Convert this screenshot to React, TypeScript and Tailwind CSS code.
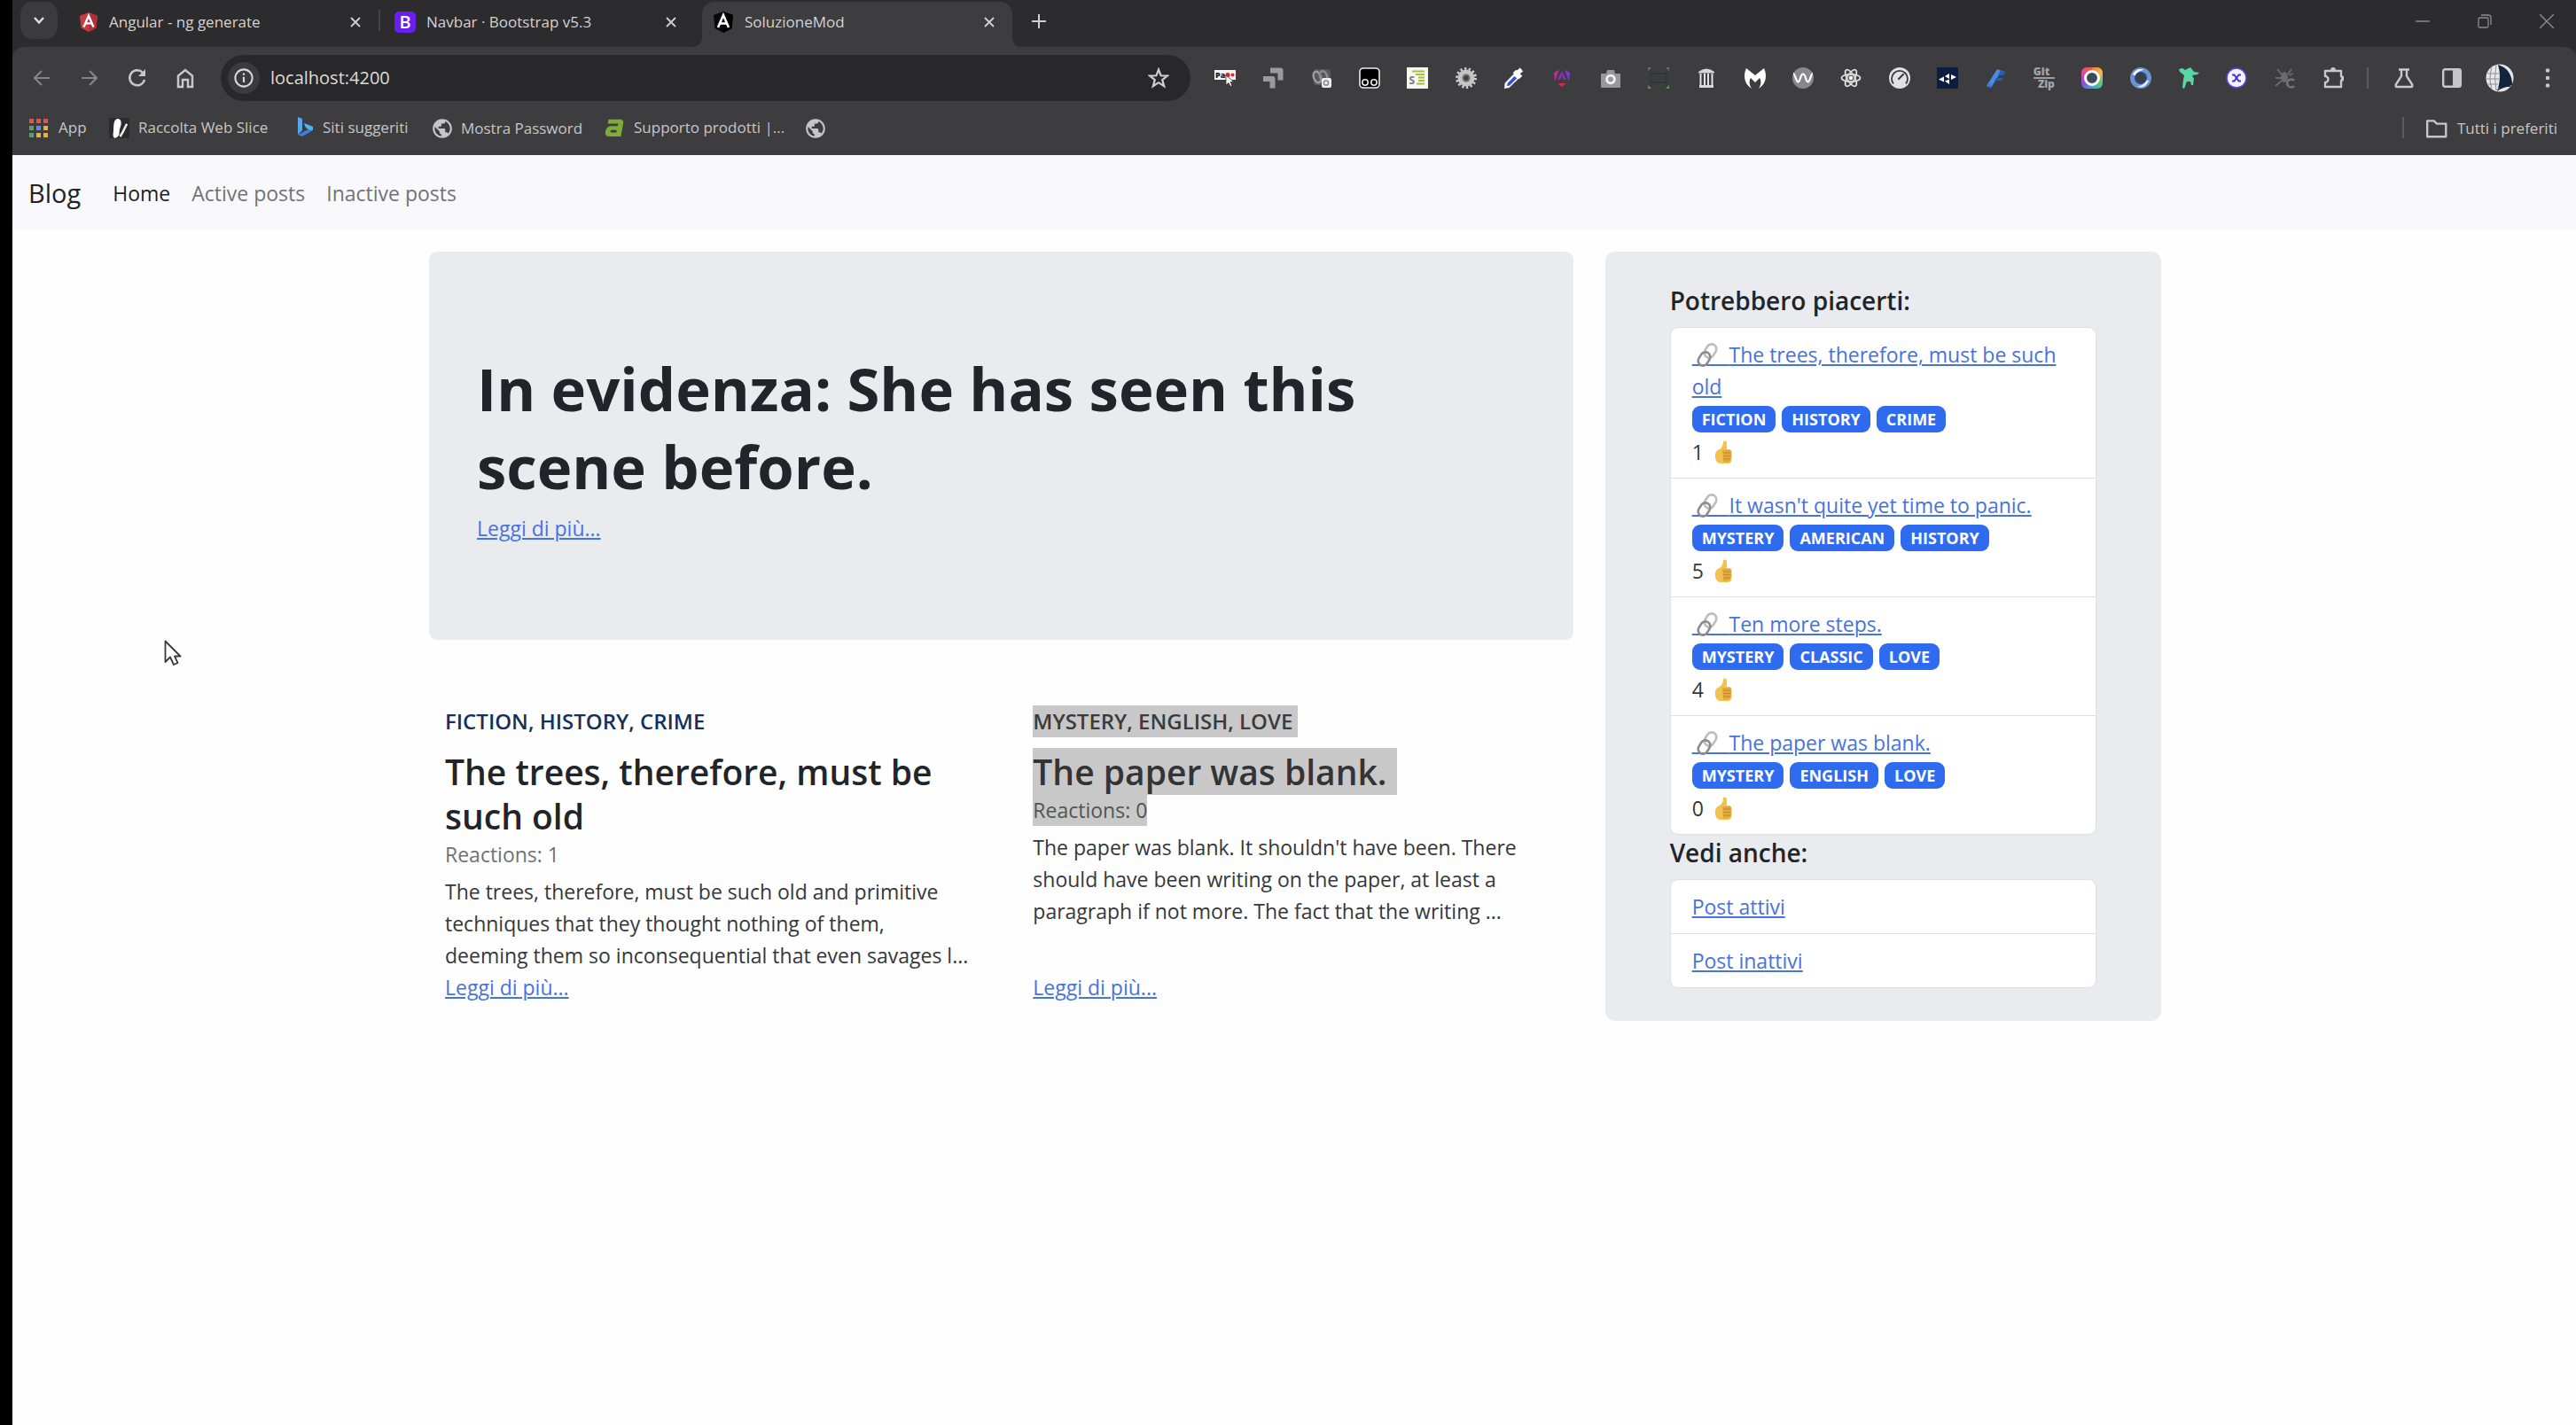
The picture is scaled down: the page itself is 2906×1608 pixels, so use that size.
import React from "react";
import { MdPublic } from "react-icons/md";

type P = { className?: string };

/* ---------- browser chrome icons ---------- */

const Svg = ({ className = "size-6", children, box = "0 0 24 24" }: { className?: string; children: React.ReactNode; box?: string }) => (
  <svg viewBox={box} className={`${className} block shrink-0`} fill="none" aria-hidden="true">
    {children}
  </svg>
);

const AngularIcon = ({ className, dark }: P & { dark?: boolean }) => (
  <Svg className={className}>
    {dark ? (
      <>
        <path d="M12 0 23 4 21.500 19 12 24 2.500 19 1 4Z" fill="#08080a" />
        <path d="M12 0 23 4 21.500 19 12 24Z" fill="#000" />
      </>
    ) : (
      <>
        <path d="M12 0 23 4 21.300 19 12 24 2.700 19 1 4Z" fill="#c73a42" />
        <path d="M12 0 23 4 21.300 19 12 24Z" fill="#b0303a" />
      </>
    )}
    <path d="M6 18 12 4 18 18M8.500 13.500H15.500" stroke="#fff" strokeWidth="2.600" />
  </Svg>
);

const CloseIcon = ({ className = "size-3" }: P) => (
  <Svg className={className} box="0 0 12 12">
    <path d="M1 1 11 11M11 1 1 11" stroke="currentColor" strokeWidth="1.800" />
  </Svg>
);

const GlobeIcon = () => <MdPublic aria-hidden="true" className="-mx-0.5 size-[26px] shrink-0 text-[#c6c6c6]" />;

/* ---------- extension icons ---------- */

const extensions: { label: string; icon: React.ReactNode }[] = [
  {
    label: "Page pointer",
    icon: (
      <Svg>
        <rect x="0" y="3" width="24" height="11" fill="#f4f4f4" />
        <text x="1" y="12" fontSize="9" fontWeight="800" fill="#222" fontFamily="Open Sans, sans-serif">Pa</text>
        <circle cx="15" cy="8.500" r="2.500" fill="#d22" />
        <circle cx="20.500" cy="8.500" r="2" fill="#e22" />
        <path d="M13 9v11l3-2.500 2 4 2-1-2-4h4Z" fill="#fff" stroke="#333" strokeWidth=".8" />
      </Svg>
    ),
  },
  {
    label: "Corner arrows",
    icon: (
      <Svg>
        <path d="M9 3.500H20.500V14.500M1 13H11.500V23.500" stroke="#9a9a9c" strokeWidth="6" strokeLinejoin="round" />
      </Svg>
    ),
  },
  {
    label: "Recorder",
    icon: (
      <Svg>
        <rect x="3" y="2" width="19" height="18" rx="3" fill="#58585a" />
        <ellipse cx="7" cy="11" rx="4" ry="6.500" stroke="#9b9b9d" strokeWidth="2.500" transform="rotate(-20 7 11)" />
        <ellipse cx="14" cy="10" rx="4" ry="6" stroke="#8b8b8d" strokeWidth="2.500" transform="rotate(-20 14 10)" />
        <rect x="12" y="12" width="11" height="11" rx="2" fill="#eee" />
        <circle cx="17" cy="17.500" r="2.600" stroke="#888" strokeWidth="1.500" />
      </Svg>
    ),
  },
  {
    label: "Night viewer",
    icon: (
      <Svg>
        <rect x="1" y="1" width="22" height="22" rx="4" fill="#000" stroke="#ececec" strokeWidth="1.600" />
        <circle cx="7" cy="17" r="3.200" stroke="#ececec" strokeWidth="1.600" />
        <circle cx="17" cy="17" r="3.200" stroke="#ececec" strokeWidth="1.600" />
      </Svg>
    ),
  },
  {
    label: "Style list",
    icon: (
      <Svg>
        <rect width="24" height="24" fill="#f6f7f2" />
        <path d="M6 4.500H20M10 8H20M13 11.500H20M13 15H20M11 18.500H20" stroke="#a9bd45" strokeWidth="2" />
        <text x="2.500" y="19" fontSize="12" fontWeight="700" fill="#777" fontFamily="Open Sans, sans-serif">S</text>
      </Svg>
    ),
  },
  {
    label: "Gear",
    icon: (
      <Svg>
        <circle cx="12" cy="12" r="10.500" stroke="#cfcfcf" strokeWidth="3" strokeDasharray="2.300 2.420" />
        <circle cx="12" cy="12" r="6.500" stroke="#c4c4c4" strokeWidth="6" />
        <circle cx="12" cy="12" r="4.500" fill="#6b6b6d" />
        <circle cx="12" cy="12" r="2.500" fill="#3d3d3f" />
      </Svg>
    ),
  },
  {
    label: "Color picker",
    icon: (
      <Svg>
        <path d="M13 6 18.500 11.500 6.500 23 1 24 1.500 18Z" fill="#f5f5f5" />
        <path d="M12.500 10 15 12.500 7 20.500 4 21 5 17.500Z" fill="#3450c8" />
        <path d="M12.500 4.500 19.500 11.500M15 7 20.500 2.500" stroke="#fff" strokeWidth="5" />
      </Svg>
    ),
  },
  {
    label: "Angular DevTools",
    icon: (
      <Svg>
        <path d="M3 6 9 2.500 4 16Z" fill="#c02a9c" />
        <path d="M21 6 15 2.500 20 16Z" fill="#7a3ad0" />
        <path d="M7 14 12 4 17 14H14L12 9.500 10 14Z" fill="#8a2fb8" />
        <path d="M7 18H17L12 22Z" fill="#d02a4c" />
      </Svg>
    ),
  },
  {
    label: "Screenshot",
    icon: (
      <Svg>
        <path d="M2 7H7L8 3H16L17 7H22Q23 7 23 8V22Q23 23 22 23H2Q1 23 1 22V8Q1 7 2 7Z" fill="#98989a" />
        <circle cx="12" cy="13.500" r="5.800" fill="#f2f2f2" />
        <circle cx="12" cy="13.500" r="3" fill="#98989a" />
      </Svg>
    ),
  },
  {
    label: "Scanner",
    icon: (
      <Svg>
        <path d="M0 0H4L0 4ZM24 0H20L24 4Z" fill="#5c7a6a" />
        <path d="M0 24H4L0 20ZM24 24H20L24 20Z" fill="#4ca82e" />
        <path d="M3 7H21M3 17H21M3 7V17M21 7V17" stroke="#2d352f" strokeWidth="1.500" />
      </Svg>
    ),
  },
  {
    label: "Library",
    icon: (
      <Svg>
        <path d="M3 5Q12-2 21 5V6.500H3ZM4 20H20V23H4Z" fill="#d8d8d8" />
        <path d="M5.500 7V20M10 7V20M14 7V20M18.500 7V20" stroke="#e2e2e2" strokeWidth="2" />
      </Svg>
    ),
  },
  {
    label: "Malware shield",
    icon: (
      <Svg>
        <path d="M2 1 12 9 22 1C26 10 24 19 16 24 19 19 19 15 17 12L12 17 7 12C5 15 5 19 8 24 0 19-2 10 2 1Z" fill="#fff" />
      </Svg>
    ),
  },
  {
    label: "Wave",
    icon: (
      <Svg>
        <circle cx="12" cy="12" r="12" fill="#88888a" />
        <path d="M1 7C3 7 4 16 6.500 16.500 9 16 9 7.500 12 7.500S15 16 17.500 16.500C20 16 21 7 23 7" stroke="#fff" strokeWidth="2.200" />
      </Svg>
    ),
  },
  {
    label: "React DevTools",
    icon: (
      <Svg>
        <g stroke="#dcdcdc" strokeWidth="1.800">
          <ellipse cx="12" cy="12" rx="10.500" ry="4.200" />
          <ellipse cx="12" cy="12" rx="10.500" ry="4.200" transform="rotate(60 12 12)" />
          <ellipse cx="12" cy="12" rx="10.500" ry="4.200" transform="rotate(120 12 12)" />
        </g>
        <circle cx="12" cy="12" r="2.400" fill="#eee" />
      </Svg>
    ),
  },
  {
    label: "Speed",
    icon: (
      <Svg>
        <circle cx="12" cy="12" r="12" fill="#e2e2e2" />
        <path d="M5 18.500A9 9 0 1 1 19 18.500" stroke="#3d3d3f" strokeWidth="1.800" />
        <path d="M11 13 16 8" stroke="#3d3d3f" strokeWidth="2.200" strokeLinecap="round" />
      </Svg>
    ),
  },
  {
    label: "Navigator",
    icon: (
      <Svg>
        <rect width="24" height="24" fill="#0d1d42" />
        <path d="M2 13.500 8 10.500V16.500ZM9 10 14 7V13ZM16 8 22 11 16 14ZM9 15.500 14 13.500V19Z" fill="#fff" />
      </Svg>
    ),
  },
  {
    label: "Marker",
    icon: (
      <Svg>
        <path d="M13 2 18 4 6 23 1 21Z" fill="#4a8be8" />
        <path d="M17 3 23 5 20 9H14ZM12 12H20L17 15H10Z" fill="#2a5cb0" />
        <path d="M1 21 6 23 8 20 3 18Z" fill="#3d78d8" />
      </Svg>
    ),
  },
  {
    label: "Git Zip",
    icon: (
      <span className="flex w-6 flex-col text-xs leading-3 font-extrabold text-[#a4a4a6]">
        <span className="border-b-2 border-[#9d9d9f] text-left">Git</span>
        <span className="text-right">Zip</span>
      </span>
    ),
  },
  {
    label: "Color lens",
    icon: (
      <span className="flex size-6 items-center justify-center rounded-md bg-[conic-gradient(from_0deg,#f07a3a,#f0c040,#58c878,#38a8e0,#8a50d8,#e84a9a,#f05a3a)]">
        <span className="block size-[18px] rounded-full border-[3px] border-white bg-[#3c4a5c]" />
      </span>
    ),
  },
  {
    label: "Swirl",
    icon: (
      <Svg>
        <circle cx="12" cy="12" r="9" stroke="#6d94d2" strokeWidth="6" />
        <path d="M3 8C6 2 12 1 16 3 11 3 8 5 7 10Z" fill="#fff" />
        <path d="M21 15C18 22 13 24 8 21.500 13 21 16 19 17 14Z" fill="#e6effc" />
        <circle cx="12" cy="12" r="6" stroke="#27467e" strokeWidth="2" />
      </Svg>
    ),
  },
  {
    label: "Runner",
    icon: (
      <Svg>
        <path d="M1 2 5 1 8 3 14 0 18 5 24 6 22 8 16 9 18 13 17 20 15 20 14 16 10 16 7 24 5 23 6 14 7 9 2 5Z" fill="#56d8a4" />
      </Svg>
    ),
  },
  {
    label: "Shuffle",
    icon: (
      <Svg>
        <circle cx="12" cy="12" r="11" fill="#f4f2ff" stroke="#5b3fe0" strokeWidth="1.600" />
        <path d="M7 8.500H9.500L14.500 15.500H17M7 15.500H9.500L14.500 8.500H17" stroke="#4a34c4" strokeWidth="2" />
      </Svg>
    ),
  },
  {
    label: "Bug checker",
    icon: (
      <Svg>
        <path d="M3 2 8 8M19 2 15 8M1 12H8M1 21 8 15M16 9 21 7" stroke="#6b6b6d" strokeWidth="1.800" />
        <ellipse cx="11" cy="11" rx="4" ry="6" fill="#6b6b6d" />
        <path d="M22 15A4.500 4.500 0 1 0 22 21" stroke="#77777a" strokeWidth="2.400" />
      </Svg>
    ),
  },
  {
    label: "Extensions",
    icon: (
      <Svg>
        <path d="M3 4H21V10A3 3 0 0 1 21 15V22H3V17A3.500 3.500 0 0 0 3 10Z" stroke="#c9c9c9" strokeWidth="2.400" strokeLinejoin="round" />
        <path d="M9 3A3 3 0 0 1 15 3ZM22 9.500A3 3 0 0 1 22 15.500Z" fill="#c9c9c9" />
      </Svg>
    ),
  },
];

/* ---------- content data ---------- */

const suggestions = [
  { title: "The trees, therefore, must be such old", tags: ["FICTION", "HISTORY", "CRIME"], likes: 1 },
  { title: "It wasn't quite yet time to panic.", tags: ["MYSTERY", "AMERICAN", "HISTORY"], likes: 5 },
  { title: "Ten more steps.", tags: ["MYSTERY", "CLASSIC", "LOVE"], likes: 4 },
  { title: "The paper was blank.", tags: ["MYSTERY", "ENGLISH", "LOVE"], likes: 0 },
];

const linkClass = "text-[#4673df] underline decoration-2 underline-offset-2";

const ChainIcon = () => (
  <svg viewBox="0 0 26 30" className="absolute top-1 left-1 h-[30px] w-[26px]" fill="none" aria-hidden="true">
    <rect x="11" y="2" width="11" height="16" rx="5.500" transform="rotate(32 16.500 10)" stroke="#bdbdbd" strokeWidth="2.600" />
    <rect x="4" y="11" width="11" height="16" rx="5.500" transform="rotate(32 9.500 19)" stroke="#8d8d8d" strokeWidth="2.600" />
  </svg>
);

const ThumbIcon = () => (
  <svg viewBox="0 0 20 26" className="h-[26px] w-5" aria-hidden="true">
    <path d="M10 1C11 0 14 0 14 3V10H17Q20 11 19.500 14V22Q19 26 15 26H6Q2 25 1 20V15Q2 11 6 10 10 7 10 1Z" fill="#f3c14e" />
    <path d="M9 11H18Q19.500 12 18.500 14 20 15.500 18.500 17.500 20 19 18 21 18.500 24 15 24.500H10" fill="#e3a83c" />
    <path d="M10 14H18.500M10 17.500H18.500M10 21H18" stroke="#c48a2c" strokeWidth="1.200" />
  </svg>
);

/* ---------- browser ---------- */

const Tab = ({ icon, title, active }: { icon: React.ReactNode; title: string; active?: boolean }) => (
  <div className={`relative flex h-[51px] w-[350px] items-center pr-5 pb-1.5 pl-3 ${active ? "ml-[9px] rounded-t-[14px] bg-[#3d3c3f]" : ""}`}>
    {active && (
      <>
        <svg viewBox="0 0 12 12" className="absolute bottom-0 -left-3 size-3" aria-hidden="true">
          <path d="M12 0V12H0Q12 12 12 0Z" fill="#3d3c3f" />
        </svg>
        <svg viewBox="0 0 12 12" className="absolute -right-3 bottom-0 size-3" aria-hidden="true">
          <path d="M0 0V12H12Q0 12 0 0Z" fill="#3d3c3f" />
        </svg>
      </>
    )}
    {icon}
    <button type="button" className="ml-3 flex-1 text-left text-[17px] leading-6 text-[#d2d2d2]">{title}</button>
    <button type="button" aria-label="Close tab" className="text-[#d0d0d0]">
      <CloseIcon />
    </button>
  </div>
);

const Bookmark = ({ icon, label, className = "" }: { icon: React.ReactNode; label: string; className?: string }) => (
  <a href="#" aria-label={label || "Bookmark"} className={`flex items-center gap-2.5 text-[17px] leading-6 text-[#c6c6c6] ${className}`}>
    {icon}
    {label}
  </a>
);

const appColors = [
  "bg-[#e0554a]", "bg-[#e0554a]", "bg-[#d9505e]",
  "bg-[#5aa06a]", "bg-[#5a8fe0]", "bg-[#e8b040]",
  "bg-[#5aa06a]", "bg-[#e8b040]", "bg-[#e8b040]",
];

const Browser = () => (
  <header className="bg-[#2c2b2d]">
    <div className="flex h-[53px] items-end">
      <button type="button" aria-label="Search tabs" className="mb-[9px] ml-[9px] flex h-[42px] w-[42px] items-center justify-center rounded-[14px] bg-[#3b3a3d] text-[#e0e0e0]">
        <svg viewBox="0 0 14 14" className="size-3.5" fill="none" aria-hidden="true">
          <path d="M2 4 7 9.500 12 4" stroke="currentColor" strokeWidth="2.400" />
        </svg>
      </button>
      <div className="ml-3 flex items-end">
        <Tab icon={<AngularIcon className="size-[22px]" />} title="Angular - ng generate" />
        <div className="mr-1 mb-[18px] h-6 w-0.5 bg-[#444346]" />
        <Tab
          icon={<span className="flex size-6 items-center justify-center rounded-[5px] bg-[#6a1ff0] text-xl leading-6 font-semibold text-white">B</span>}
          title="Navbar · Bootstrap v5.3"
        />
        <Tab icon={<AngularIcon dark />} title="SoluzioneMod" active />
      </div>
      <button type="button" aria-label="New tab" className="mb-[21px] ml-[22px] text-[#d0d0d0]">
        <svg viewBox="0 0 16 16" className="size-4" fill="none" aria-hidden="true">
          <path d="M8 0V16M0 8H16" stroke="currentColor" strokeWidth="2" />
        </svg>
      </button>
      <div className="mr-[25px] mb-[21px] ml-auto flex gap-[54px] text-[#8b8a8d]">
        <button type="button" aria-label="Minimize">
          <svg viewBox="0 0 16 16" className="size-4" fill="none" aria-hidden="true"><path d="M0 8H16" stroke="currentColor" strokeWidth="1.500" /></svg>
        </button>
        <button type="button" aria-label="Restore">
          <svg viewBox="0 0 16 16" className="size-4" fill="none" stroke="currentColor" strokeWidth="1.300" aria-hidden="true">
            <rect x="1" y="4" width="11" height="11" rx="1.500" />
            <path d="M4 1H12Q15 1 15 4V12" />
          </svg>
        </button>
        <button type="button" aria-label="Close window">
          <svg viewBox="0 0 16 16" className="size-4" fill="none" aria-hidden="true"><path d="M0 0 16 16M16 0 0 16" stroke="currentColor" strokeWidth="1.400" /></svg>
        </button>
      </div>
    </div>

    <div className="rounded-t-xl bg-[#3d3d3f]">
      <div className="flex h-[70px] items-center">
        <div className="flex w-[235px] items-center gap-[30px] pl-[21px] text-[#c8c8c8]">
          <button type="button" aria-label="Back" className="text-[#858587]">
            <Svg><path d="M21 12H4M12 4 4 12 12 20" stroke="currentColor" strokeWidth="2.200" /></Svg>
          </button>
          <button type="button" aria-label="Forward" className="text-[#858587]">
            <Svg><path d="M3 12H20M12 4 20 12 12 20" stroke="currentColor" strokeWidth="2.200" /></Svg>
          </button>
          <button type="button" aria-label="Reload">
            <Svg>
              <path d="M20 14A8.500 8.500 0 1 1 18 6L20 8" stroke="currentColor" strokeWidth="2.500" />
              <path d="M21 2V10H13Z" fill="currentColor" />
            </Svg>
          </button>
          <button type="button" aria-label="Home">
            <Svg><path d="M4 22V9.500L12 3 20 9.500V22H15V14H9V22Z" stroke="currentColor" strokeWidth="2.500" /></Svg>
          </button>
        </div>
        <div className="flex h-[52px] flex-1 items-center rounded-full bg-[#28282a] pr-6 pl-2">
          <span className="flex size-9 items-center justify-center rounded-full bg-[#3b3a3d]">
            <Svg className="size-[22px]">
              <circle cx="12" cy="12" r="10.500" stroke="#d8d8d8" strokeWidth="2.200" />
              <path d="M12 10.500V17.500M12 6V8.500" stroke="#d8d8d8" strokeWidth="2.400" />
            </Svg>
          </span>
          <input aria-label="Address" defaultValue="localhost:4200" className="ml-3 min-w-0 flex-1 bg-transparent text-xl leading-7 text-[#dcdcdc] outline-none" />
          <button type="button" aria-label="Bookmark this page">
            <Svg>
              <path d="M12 2.500 14.600 9.300 21.800 9.600 16.200 14.100 18.200 21.200 12 17.200 5.800 21.200 7.800 14.100 2.200 9.600 9.400 9.300Z" stroke="#cfcfcf" strokeWidth="2.200" />
            </Svg>
          </button>
        </div>
        <div className="ml-[27px] flex w-[1274px] items-center justify-between">
          {extensions.map((e) => (
            <button key={e.label} type="button" aria-label={e.label} className="w-6">
              {e.icon}
            </button>
          ))}
        </div>
        <div className="ml-[26px] h-6 w-0.5 bg-[#5b5b5e]" />
        <div className="mr-5 ml-7 flex items-center gap-[30px]">
          <button type="button" aria-label="Labs">
            <Svg>
              <path d="M6 2.500H18M9 3V10L3 19Q2 22 4 22H20Q22 22 21 19L15 10V3" stroke="#c9c9c9" strokeWidth="2.400" />
            </Svg>
          </button>
          <button type="button" aria-label="Side panel">
            <Svg>
              <rect x="2.200" y="2.200" width="19.600" height="19.600" rx="2" stroke="#c9c9c9" strokeWidth="2.400" />
              <rect x="13" y="2" width="9" height="20" fill="#c9c4c9" />
            </Svg>
          </button>
          <button type="button" aria-label="Profile" className="-mx-1">
            <Svg className="size-8" box="0 0 32 32">
              <circle cx="16" cy="16" r="15.500" fill="#e6e8ea" />
              <path d="M14 1Q30 6 30 24L14 28Q18 14 14 1Z" fill="#12253c" />
              <path d="M2 11H15M1 17H15M3 23H14M7 4Q3 16 7 28M12 1Q9 16 12 30" stroke="#8b9098" strokeWidth="1" />
              <path d="M13 30Q20 25 28 25" stroke="#12253c" strokeWidth="1.500" />
            </Svg>
          </button>
          <button type="button" aria-label="Menu">
            <Svg>
              <circle cx="12" cy="3.500" r="2.300" fill="#c9c9c9" />
              <circle cx="12" cy="12" r="2.300" fill="#c9c9c9" />
              <circle cx="12" cy="20.500" r="2.300" fill="#c9c9c9" />
            </Svg>
          </button>
        </div>
      </div>

      <nav aria-label="Bookmarks" className="flex h-[52px] items-start pt-[9px] pl-[19px]">
        <Bookmark
          className="w-[90px]"
          label="App"
          icon={
            <span className="mr-0.5 grid grid-cols-3 gap-[3px]">
              {appColors.map((c, i) => (
                <span key={i} className={`size-[5px] ${c}`} />
              ))}
            </span>
          }
        />
        <Bookmark
          className="w-[211px]"
          label="Raccolta Web Slice"
          icon={
            <Svg className="size-[23px]">
              <rect width="24" height="24" fill="#2b2b2d" />
              <path d="M10 1C15 1 15 7 13 12 11 16 14 20 9 23 6 25 4 22 5 17 6 13 4 2 10 1Z" fill="#fff" />
              <path d="M21 7 16 17 13 22" stroke="#eee" strokeWidth="2.600" />
            </Svg>
          }
        />
        <Bookmark
          className="w-[154px]"
          label="Siti suggeriti"
          icon={
            <Svg className="h-6 w-5" box="0 0 20 24">
              <path d="M2 0 7 2V15L2 20Z" fill="#5aa4ec" />
              <path d="M2 20 7 22 19 15V11L9 7 11 12 14 14Z" fill="#3b7fe0" />
              <path d="M9 7 19 11V15L14 14 11 12Z" fill="#52b4e8" />
            </Svg>
          }
        />
        <Bookmark className="w-[193px]" label="Mostra Password" icon={<GlobeIcon />} />
        <Bookmark
          className="w-[228px]"
          label="Supporto prodotti |..."
          icon={
            <Svg className="h-[22px] w-6">
              <path d="M5 2H19Q24 2 23 7L20 23H6Q0 23 1 17 2 11 7 10H16L17 7H4Z" fill="#80ab38" />
              <path d="M8 15H15L14.500 18H8Q6 16.500 8 15Z" fill="#3d3d3f" />
            </Svg>
          }
        />
        <Bookmark label="" icon={<GlobeIcon />} />
        <div className="ml-auto h-6 w-0.5 bg-[#5b5b5e]" />
        <Bookmark
          className="mr-[21px] ml-6"
          label="Tutti i preferiti"
          icon={
            <Svg className="size-[26px]">
              <path d="M2 4H9L12 7H21.500V20.500H2Z" stroke="#c6c6c6" strokeWidth="2.200" strokeLinejoin="round" />
            </Svg>
          }
        />
      </nav>
    </div>
  </header>
);

/* ---------- page ---------- */

const Navbar = () => (
  <nav aria-label="Main" className="flex h-[84px] items-center gap-6 bg-[#f9f9fd] pt-0.5 pl-[18px] text-[23px] leading-9">
    <a href="#" className="mr-3 text-[29px] text-[#222]">Blog</a>
    <a href="#" className="text-[#1f1f1f]">Home</a>
    <a href="#" className="text-[#737373]">Active posts</a>
    <a href="#" className="text-[#737373]">Inactive posts</a>
  </nav>
);

const Hero = () => (
  <section className="flex h-[438px] flex-col items-start justify-center rounded-[9px] bg-[#e9ebef] pt-0.5 pr-28 pl-[54px]">
    <h1 className="text-[67px] leading-[88px] font-bold text-[#212529]">In evidenza: She has seen this scene before.</h1>
    <a href="#" className={`mt-2 ${linkClass}`}>Leggi di più...</a>
  </section>
);

const Article = ({ tags, title, reactions, body, selected }: { tags: string; title: string; reactions: number; body: string; selected?: boolean }) => (
  <article className="flex flex-col items-start px-[18px]">
    <strong className={`text-2xl leading-9 font-semibold ${selected ? "bg-[#c8c8c9] pr-1.5 text-[#3b3b3c]" : "text-[#16305c]"}`}>{tags}</strong>
    <h3 className={`mt-3.5 text-[39px] leading-[50px] font-semibold ${selected ? "text-[#333435]" : "text-[#212529]"}`}>
      <span className={selected ? "bg-[#c8c8c9] pr-3" : ""}>{title}</span>
    </h3>
    <p className={selected ? "bg-[#c8c8c9] text-[#535354]" : "text-[#6f7275]"}>Reactions: {reactions}</p>
    <p className="mt-1.5 text-[#35383b]">{body}</p>
    <a href="#" className={`mt-auto ${linkClass}`}>Leggi di più...</a>
  </article>
);

const Sidebar = () => (
  <aside className="rounded-[11px] bg-[#e9ebef] px-[73px] py-[37px]">
    <h5 className="text-[28px] leading-9 font-semibold text-[#212529]">Potrebbero piacerti:</h5>
    <ul className="mt-3 overflow-hidden rounded-[9px] border border-[#dee0e8] bg-white">
      {suggestions.map((s) => (
        <li key={s.title} className="border-b border-[#dcdeea] px-6 pt-3 pb-[11px] last:border-b-0">
          <a href="#" className={`relative block ${linkClass}`}>
            <ChainIcon />
            {"\u00a0".repeat(7)}
            {s.title}
          </a>
          <div className="flex h-[38px] items-center gap-[7px]">
            {s.tags.map((t) => (
              <span key={t} className="rounded-[9px] bg-[#2f6bee] px-[11px] text-lg leading-[30px] font-bold text-white">{t}</span>
            ))}
          </div>
          <div className="flex items-center gap-3 text-[#35383b]">
            {s.likes}
            <ThumbIcon />
          </div>
        </li>
      ))}
    </ul>
    <h5 className="mt-0.5 text-[28px] leading-9 font-semibold text-[#212529]">Vedi anche:</h5>
    <ul className="mt-3 overflow-hidden rounded-[9px] border border-[#dee0e8] bg-white">
      <li className="border-b border-[#dcdeea] px-6 py-3"><a href="#" className={linkClass}>Post attivi</a></li>
      <li className="px-6 py-3"><a href="#" className={linkClass}>Post inattivi</a></li>
    </ul>
  </aside>
);

export default function App() {
  return (
    <div className="relative min-h-screen bg-black pl-3.5 font-['Open_Sans',sans-serif]">
      <div className="min-h-screen bg-[#fefefe]">
        <Browser />
        <Navbar />
        <main className="mx-auto mt-[25px] grid max-w-[1956px] grid-cols-3 items-start gap-9 pl-0.5 text-[23px] leading-9">
          <div className="col-span-2">
            <Hero />
            <div className="mt-[74px] grid grid-cols-2 gap-9">
              <Article
                tags="FICTION, HISTORY, CRIME"
                title="The trees, therefore, must be such old"
                reactions={1}
                body="The trees, therefore, must be such old and primitive techniques that they thought nothing of them, deeming them so inconsequential that even savages l..."
              />
              <Article
                selected
                tags="MYSTERY, ENGLISH, LOVE"
                title="The paper was blank."
                reactions={0}
                body="The paper was blank. It shouldn't have been. There should have been writing on the paper, at least a paragraph if not more. The fact that the writing ..."
              />
            </div>
          </div>
          <Sidebar />
        </main>
      </div>
      <svg viewBox="0 0 20 30" className="absolute top-[722px] left-[185px] h-[30px] w-5" aria-hidden="true">
        <path d="M1.500 1.500V25L7 19.500 11 28 15.500 26 12 18.500H18.500Z" fill="#fff" stroke="#3a3a3c" strokeWidth="1.800" strokeLinejoin="round" />
      </svg>
    </div>
  );
}
